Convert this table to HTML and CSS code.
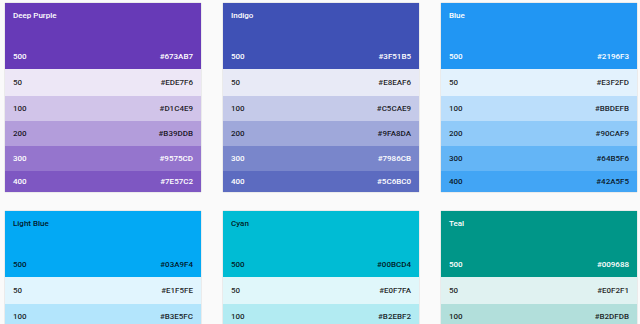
FILE: index.html
```html
<!DOCTYPE html>
<html>
<head>
<meta charset="utf-8">
<link rel="stylesheet" href="styles.css">
</head>
<body>
<main class="grid">
  <section class="card">
    <div class="head light-text" style="background:#673AB7"><span>Deep Purple</span><div class="row-line"><span>500</span><span>#673AB7</span></div></div>
    <div class="shade s50" style="background:#EDE7F6"><span>50</span><span>#EDE7F6</span></div>
    <div class="shade" style="background:#D1C4E9"><span>100</span><span>#D1C4E9</span></div>
    <div class="shade" style="background:#B39DDB"><span>200</span><span>#B39DDB</span></div>
    <div class="shade light-text" style="background:#9575CD"><span>300</span><span>#9575CD</span></div>
    <div class="shade s400 light-text" style="background:#7E57C2"><span>400</span><span>#7E57C2</span></div>
  </section>
  <section class="card">
    <div class="head light-text" style="background:#3F51B5"><span>Indigo</span><div class="row-line"><span>500</span><span>#3F51B5</span></div></div>
    <div class="shade s50" style="background:#E8EAF6"><span>50</span><span>#E8EAF6</span></div>
    <div class="shade" style="background:#C5CAE9"><span>100</span><span>#C5CAE9</span></div>
    <div class="shade" style="background:#9FA8DA"><span>200</span><span>#9FA8DA</span></div>
    <div class="shade light-text" style="background:#7986CB"><span>300</span><span>#7986CB</span></div>
    <div class="shade s400 light-text" style="background:#5C6BC0"><span>400</span><span>#5C6BC0</span></div>
  </section>
  <section class="card">
    <div class="head light-text" style="background:#2196F3"><span>Blue</span><div class="row-line"><span>500</span><span>#2196F3</span></div></div>
    <div class="shade s50" style="background:#E3F2FD"><span>50</span><span>#E3F2FD</span></div>
    <div class="shade" style="background:#BBDEFB"><span>100</span><span>#BBDEFB</span></div>
    <div class="shade" style="background:#90CAF9"><span>200</span><span>#90CAF9</span></div>
    <div class="shade" style="background:#64B5F6"><span>300</span><span>#64B5F6</span></div>
    <div class="shade s400" style="background:#42A5F5"><span>400</span><span>#42A5F5</span></div>
  </section>
  <section class="card">
    <div class="head" style="background:#03A9F4"><span>Light Blue</span><div class="row-line"><span>500</span><span>#03A9F4</span></div></div>
    <div class="shade s50" style="background:#E1F5FE"><span>50</span><span>#E1F5FE</span></div>
    <div class="shade" style="background:#B3E5FC"><span>100</span><span>#B3E5FC</span></div>
  </section>
  <section class="card">
    <div class="head" style="background:#00BCD4"><span>Cyan</span><div class="row-line"><span>500</span><span>#00BCD4</span></div></div>
    <div class="shade s50" style="background:#E0F7FA"><span>50</span><span>#E0F7FA</span></div>
    <div class="shade" style="background:#B2EBF2"><span>100</span><span>#B2EBF2</span></div>
  </section>
  <section class="card">
    <div class="head light-text" style="background:#009688"><span>Teal</span><div class="row-line"><span>500</span><span>#009688</span></div></div>
    <div class="shade s50" style="background:#E0F2F1"><span>50</span><span>#E0F2F1</span></div>
    <div class="shade" style="background:#B2DFDB"><span>100</span><span>#B2DFDB</span></div>
  </section>
</main>
</body>
</html>
```
FILE: styles.css
```css
html, body {
  margin: 0;
  padding: 0;
  overflow: hidden;
  background: #fafafa;
}
body {
  font-family: Roboto, "Liberation Sans", sans-serif;
  font-size: 8px;
  font-weight: 500;
  color: rgba(0, 0, 0, 0.87);
}
.grid {
  display: grid;
  grid-template-columns: repeat(3, 196px);
  column-gap: 22px;
  row-gap: 19px;
  padding: 3px 0 0 5px;
}
.card {
  display: flex;
  flex-direction: column;
  box-shadow: 0 0 1px rgba(0, 0, 0, 0.35);
}
.head {
  height: 66px;
  box-sizing: border-box;
  padding: 8px;
  line-height: 9px;
  display: flex;
  flex-direction: column;
  justify-content: space-between;
}
.row-line {
  display: flex;
  justify-content: space-between;
}
.shade {
  height: 25px;
  box-sizing: border-box;
  padding: 0 8px;
  display: flex;
  align-items: center;
  justify-content: space-between;
  line-height: 9px;
}
.shade.s50 { height: 27px; }
.shade.s400 { height: 21px; }
.light-text { color: #fff; }
```
